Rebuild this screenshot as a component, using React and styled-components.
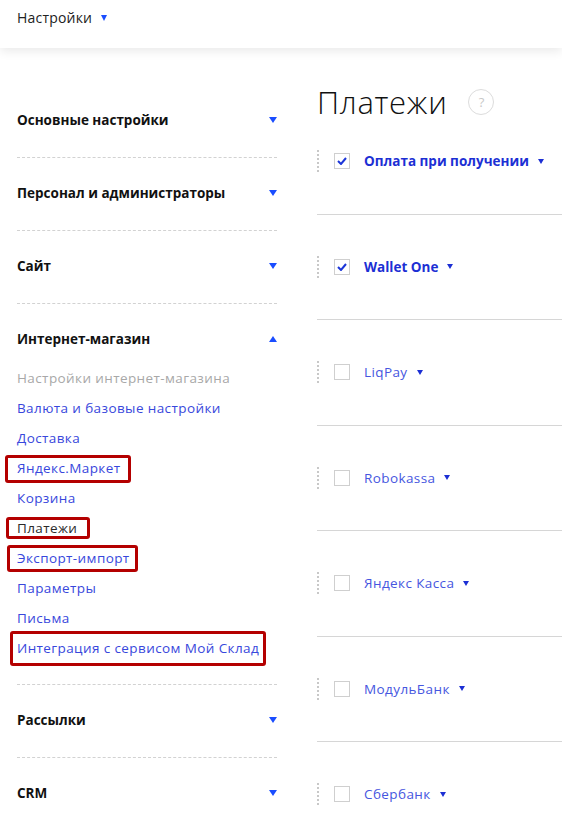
import React from 'react';
import styled, { createGlobalStyle } from 'styled-components';

const GlobalStyle = createGlobalStyle`
  body {
    margin: 0;
    background: #fff;
    font-family: "Open Sans", "Noto Sans", sans-serif;
    color: #111;
  }
`;

const Triangle = styled.span`
  display: inline-block;
  width: 0;
  height: 0;
  border-left: ${p => p.$w / 2}px solid transparent;
  border-right: ${p => p.$w / 2}px solid transparent;
  ${p => (p.$up ? 'border-bottom' : 'border-top')}: ${p => p.$h}px solid ${p => p.$color || '#1a4dff'};
  flex-shrink: 0;
`;

const TopBar = styled.header`
  position: relative;
  z-index: 1;
  height: 48px;
  box-sizing: border-box;
  padding: 8px 17px 0;
  display: flex;
  align-items: flex-start;
  box-shadow: 0 3px 10px rgba(0, 0, 0, 0.09);
`;

const TopTitle = styled.span`
  display: flex;
  align-items: center;
  gap: 9px;
  font-size: 14px;
  line-height: 20px;
  letter-spacing: 0.2px;
  color: #222;
`;

const Layout = styled.div`
  display: flex;
  gap: 40px;
  padding-left: 17px;
`;

const Sidebar = styled.aside`
  width: 260px;
  flex-shrink: 0;
  padding-top: 37px;
`;

const Section = styled.section`
  padding: 25px 0 ${p => (p.$open ? 21 : 27)}px;
  border-bottom: 1px dashed #d2d2d2;
  &:last-child {
    border-bottom: none;
  }
`;

const SectionTitle = styled.div`
  display: flex;
  align-items: center;
  justify-content: space-between;
  line-height: 20px;
  font-size: 13.5px;
  font-weight: 700;
  color: #111;
`;

const Links = styled.ul`
  list-style: none;
  margin: 14px 0 0;
  padding: 0;
`;

const tones = {
  muted: '#a8a8a8',
  active: '#2b2b2b',
  link: '#3847dc',
};

const LinkItem = styled.li`
  height: 30px;
  display: flex;
  align-items: center;
  font-size: 13.5px;
  letter-spacing: 0.4px;
  color: ${p => tones[p.$tone || 'link']};
`;

// the red frame is drawn around the label's own 16px line box
const LinkText = styled.span`
  position: relative;
  display: block;
  line-height: 16px;
  ${p =>
    p.$mark &&
    `
    &::after {
      content: '';
      position: absolute;
      top: -${p.$mark[0]}px;
      right: -${p.$mark[1]}px;
      bottom: -${p.$mark[2]}px;
      left: -${p.$mark[3]}px;
      border: 3px solid #b40000;
      border-radius: 3px;
      pointer-events: none;
    }
  `}
`;

const Main = styled.main`
  flex: 1;
  min-width: 0;
  padding-top: 34px;
`;

const PageTitle = styled.h1`
  margin: 0;
  display: flex;
  align-items: center;
  gap: 21px;
  font-size: 31px;
  font-weight: 300;
  line-height: 40px;
  letter-spacing: 0.7px;
  color: #111;
`;

const HelpBadge = styled.span`
  width: 26px;
  height: 26px;
  box-sizing: border-box;
  border: 1px solid #dcdcdc;
  border-radius: 50%;
  display: flex;
  align-items: center;
  justify-content: center;
  font-size: 13px;
  font-weight: 400;
  letter-spacing: 0;
  color: #c8c8c8;
`;

const PaymentList = styled.div`
  display: flex;
  flex-direction: column;
`;

const Payment = styled.div`
  padding: 41px 0 41.5px;
  border-bottom: 1px solid #d6d6d6;
  &:first-child {
    padding-top: 28px;
  }
`;

const PaymentHead = styled.div`
  display: flex;
  align-items: center;
  height: 22px;
  border-left: 2px dotted #c8c8c8;
  padding-left: 15px;
`;

const Checkbox = styled.span`
  width: 16px;
  height: 16px;
  box-sizing: border-box;
  border: 1px solid #cfcfcf;
  display: flex;
  align-items: center;
  justify-content: center;
  margin-right: 14px;
  flex-shrink: 0;
`;

const PaymentName = styled.span`
  display: flex;
  align-items: center;
  gap: 9px;
  font-size: 13.5px;
  font-weight: ${p => (p.$on ? 700 : 400)};
  letter-spacing: ${p => (p.$on ? 0 : 0.4)}px;
  color: ${p => (p.$on ? '#1c2fd4' : '#4656e0')};
  white-space: nowrap;
`;

const Check = () => (
  <svg width="10" height="8" viewBox="0 0 10 8">
    <polyline points="1,4 4,7 9,1" fill="none" stroke="#1c36d8" strokeWidth="2" />
  </svg>
);

const sections = [
  { title: 'Основные настройки' },
  { title: 'Персонал и администраторы' },
  { title: 'Сайт' },
  {
    title: 'Интернет-магазин',
    open: true,
    links: [
      { label: 'Настройки интернет-магазина', tone: 'muted' },
      { label: 'Валюта и базовые настройки' },
      { label: 'Доставка' },
      { label: 'Яндекс.Маркет', mark: [5, 11, 7, 12] },
      { label: 'Корзина' },
      { label: 'Платежи', tone: 'active', mark: [3, 13, 3, 11] },
      { label: 'Экспорт-импорт', mark: [5, 8, 6, 10] },
      { label: 'Параметры' },
      { label: 'Письма' },
      { label: 'Интеграция с сервисом Мой Склад', mark: [9, 7, 10, 7] },
    ],
  },
  { title: 'Рассылки' },
  { title: 'CRM' },
];

const payments = [
  { name: 'Оплата при получении', on: true },
  { name: 'Wallet One', on: true },
  { name: 'LiqPay' },
  { name: 'Robokassa' },
  { name: 'Яндекс Касса' },
  { name: 'МодульБанк' },
  { name: 'Сбербанк' },
];

export default function App() {
  return (
    <>
      <GlobalStyle />
      <TopBar>
        <TopTitle>
          Настройки
          <Triangle $w={7} $h={6} />
        </TopTitle>
      </TopBar>
      <Layout>
        <Sidebar>
          {sections.map(s => (
            <Section key={s.title} $open={s.open}>
              <SectionTitle>
                {s.title}
                <Triangle $w={8} $h={6} $up={s.open} />
              </SectionTitle>
              {s.links && (
                <Links>
                  {s.links.map(l => (
                    <LinkItem key={l.label} $tone={l.tone}>
                      <LinkText $mark={l.mark}>{l.label}</LinkText>
                    </LinkItem>
                  ))}
                </Links>
              )}
            </Section>
          ))}
        </Sidebar>
        <Main>
          <PageTitle>
            Платежи
            <HelpBadge>?</HelpBadge>
          </PageTitle>
          <PaymentList>
            {payments.map(p => (
              <Payment key={p.name}>
                <PaymentHead>
                  <Checkbox>{p.on && <Check />}</Checkbox>
                  <PaymentName $on={p.on}>
                    {p.name}
                    <Triangle $w={7} $h={5} $color="#1c2fd4" />
                  </PaymentName>
                </PaymentHead>
              </Payment>
            ))}
          </PaymentList>
        </Main>
      </Layout>
    </>
  );
}
